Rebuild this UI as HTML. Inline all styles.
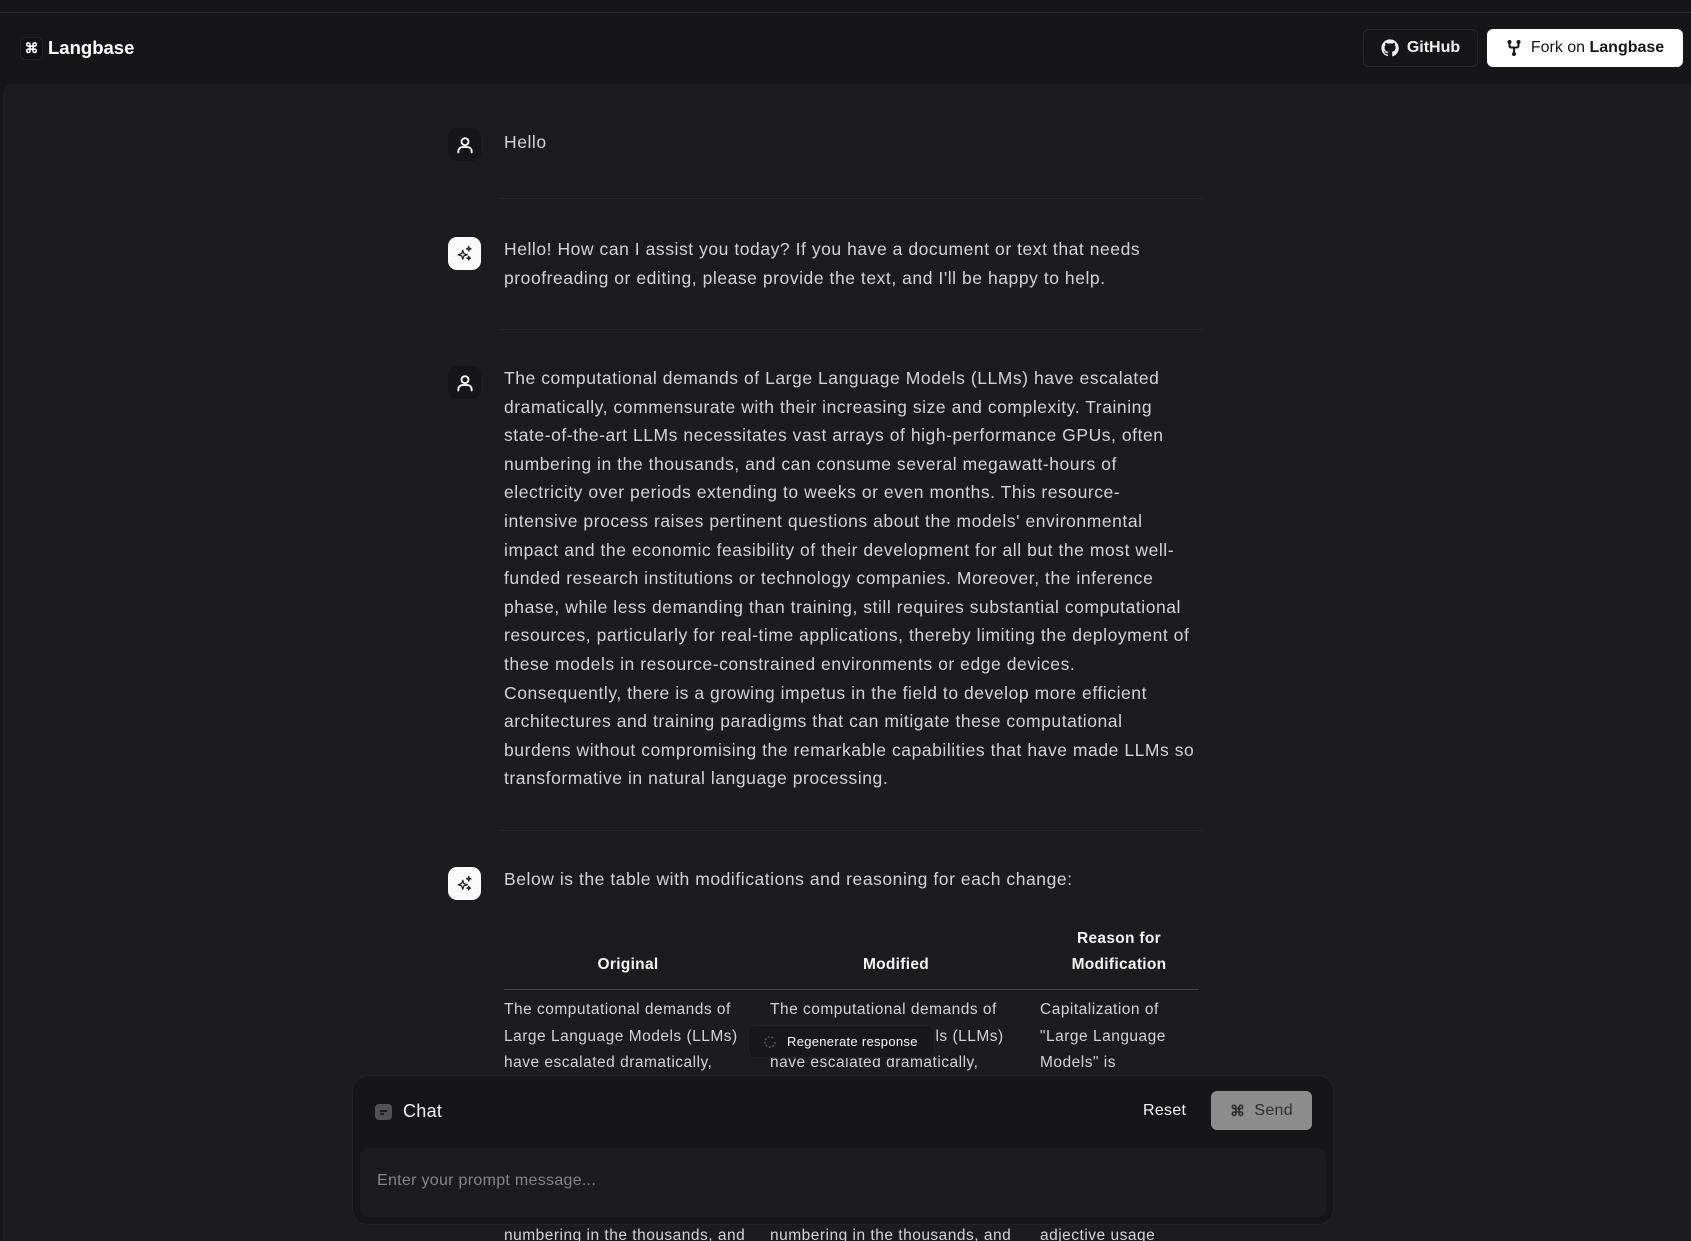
<!DOCTYPE html>
<html style="overflow:hidden;height:1241px"><head><meta charset="utf-8"><style>
*{margin:0;padding:0;box-sizing:border-box}
body{width:1691px;height:1241px;background:#161618;font-family:"Liberation Sans",sans-serif;overflow:hidden;position:relative;color:#d6d6da}
.a{position:absolute}
.topline{left:0;top:12px;width:1691px;height:1px;background:#26262a}
.main{left:3px;top:84px;width:1688px;height:1157px;background:#1c1c1e;border-radius:10px 0 0 0}
.av{width:33px;height:33px;border-radius:9px;display:flex;align-items:center;justify-content:center}
.av.u{background:#161618}
.av.b{background:#fafafa}
.t{font-size:17.5px;line-height:28.6px;letter-spacing:0.55px;white-space:nowrap;color:#d4d4d8}
.sep{left:500px;width:703px;height:1px;background:#27272a}
.th{font-weight:bold;color:#f4f4f5;font-size:15.5px;line-height:26px;text-align:center;white-space:nowrap;letter-spacing:0.3px}
.td{font-size:15.5px;line-height:26.5px;white-space:nowrap;color:#d4d4d8;letter-spacing:0.5px}
</style></head><body>
<div class="a topline"></div>
<div class="a" style="left:20px;top:37px;width:23px;height:23px;border-radius:6px;background:#111113;border:1px solid #222;display:flex;align-items:center;justify-content:center;color:#fff;font-size:14px;font-weight:bold">⌘</div>
<div class="a" style="left:48px;top:36px;font-size:18.5px;font-weight:bold;color:#fff;line-height:24px">Langbase</div>
<div class="a" style="left:1363px;top:29px;width:115px;height:38px;border:1px solid #27272a;border-radius:6px;background:#161618;display:flex;align-items:center;justify-content:center;gap:8px;color:#f0f0f0;font-size:16px;font-weight:bold">
<svg width="18" height="18" viewBox="0 0 24 24" fill="#f0f0f0"><path d="M12 .5C5.7.5.5 5.7.5 12c0 5.1 3.3 9.4 7.9 10.9.6.1.8-.3.8-.6v-2c-3.2.7-3.900-1.5-3.900-1.5-.5-1.3-1.300-1.700-1.300-1.700-1-.7.1-.7.1-.7 1.200.1 1.800 1.200 1.800 1.200 1 1.800 2.700 1.300 3.400 1 .1-.8.4-1.300.7-1.600-2.600-.3-5.300-1.300-5.300-5.700 0-1.300.5-2.300 1.200-3.100-.1-.3-.5-1.500.1-3.100 0 0 1-.3 3.200 1.200a11 11 0 0 1 5.800 0c2.200-1.500 3.200-1.200 3.200-1.200.6 1.600.2 2.800.1 3.100.8.8 1.200 1.900 1.200 3.100 0 4.400-2.700 5.400-5.300 5.700.4.4.8 1.100.8 2.200v3.300c0 .3.2.7.8.6 4.600-1.500 7.900-5.800 7.900-10.900C23.500 5.700 18.300.5 12 .5z"/></svg>GitHub</div>
<div class="a" style="left:1487px;top:29px;width:196px;height:38px;border-radius:6px;background:#fff;display:flex;align-items:center;justify-content:center;gap:9px;color:#18181b;font-size:16px">
<svg width="16" height="18" viewBox="0 0 16 18"><circle cx="3.5" cy="3" r="2" fill="#18181b"/><circle cx="12.5" cy="3" r="2" fill="#18181b"/><circle cx="8" cy="15" r="2" fill="#18181b"/><path d="M3.5 4v2.5q0 2 2 2h5q2 0 2-2V4M8 8.5V13" stroke="#18181b" stroke-width="2" fill="none"/></svg><span>Fork on <b>Langbase</b></span></div>

<div class="a main"></div>

<div class="a av u" style="left:448px;top:128px"><svg width="20" height="20" viewBox="0 0 24 24" fill="none" stroke="#fff" stroke-width="2.2" stroke-linecap="round"><circle cx="12" cy="8" r="4.2"/><path d="M4 21v-1.5a5 5 0 0 1 5-5h6a5 5 0 0 1 5 5V21"/></svg></div>
<div class="a t" style="left:504px;top:128px">Hello</div>
<div class="a sep" style="top:198px"></div>

<div class="a av b" style="left:448px;top:237px"><svg width="18" height="18" viewBox="0 0 24 24" fill="none" stroke="#222" stroke-width="1.6" stroke-linejoin="round"><path d="M9 7l1.5 4.5L15 13l-4.5 1.5L9 19l-1.5-4.5L3 13l4.5-1.5z"/><path d="M17 2l.8 2.2L20 5l-2.2.8L17 8l-.8-2.2L14 5l2.2-.8zM17 15l.7 1.8 1.8.7-1.8.7L17 20l-.7-1.8-1.8-.7 1.8-.7z"/></svg></div>
<div class="a t" style="left:504px;top:235px">Hello! How can I assist you today? If you have a document or text that needs<br>proofreading or editing, please provide the text, and I'll be happy to help.</div>
<div class="a sep" style="top:329px"></div>

<div class="a av u" style="left:448px;top:366px"><svg width="20" height="20" viewBox="0 0 24 24" fill="none" stroke="#fff" stroke-width="2.2" stroke-linecap="round"><circle cx="12" cy="8" r="4.2"/><path d="M4 21v-1.5a5 5 0 0 1 5-5h6a5 5 0 0 1 5 5V21"/></svg></div>
<div class="a t" style="left:504px;top:364px">The computational demands of Large Language Models (LLMs) have escalated<br>dramatically, commensurate with their increasing size and complexity. Training<br>state-of-the-art LLMs necessitates vast arrays of high-performance GPUs, often<br>numbering in the thousands, and can consume several megawatt-hours of<br>electricity over periods extending to weeks or even months. This resource-<br>intensive process raises pertinent questions about the models' environmental<br>impact and the economic feasibility of their development for all but the most well-<br>funded research institutions or technology companies. Moreover, the inference<br>phase, while less demanding than training, still requires substantial computational<br>resources, particularly for real-time applications, thereby limiting the deployment of<br>these models in resource-constrained environments or edge devices.<br>Consequently, there is a growing impetus in the field to develop more efficient<br>architectures and training paradigms that can mitigate these computational<br>burdens without compromising the remarkable capabilities that have made LLMs so<br>transformative in natural language processing.</div>
<div class="a sep" style="top:830px"></div>

<div class="a av b" style="left:448px;top:867px"><svg width="18" height="18" viewBox="0 0 24 24" fill="none" stroke="#222" stroke-width="1.6" stroke-linejoin="round"><path d="M9 7l1.5 4.5L15 13l-4.5 1.5L9 19l-1.5-4.5L3 13l4.5-1.5z"/><path d="M17 2l.8 2.2L20 5l-2.2.8L17 8l-.8-2.2L14 5l2.2-.8zM17 15l.7 1.8 1.8.7-1.8.7L17 20l-.7-1.8-1.8-.7 1.8-.7z"/></svg></div>
<div class="a t" style="left:504px;top:865px">Below is the table with modifications and reasoning for each change:</div>

<div class="a th" style="left:540px;top:952px;width:176px">Original</div>
<div class="a th" style="left:806px;top:952px;width:180px">Modified</div>
<div class="a th" style="left:1040px;top:926px;width:158px">Reason for<br>Modification</div>
<div class="a" style="left:504px;top:989px;width:695px;height:1px;background:#3f3f46"></div>
<div class="a td" style="left:504px;top:997px">The computational demands of<br>Large Language Models (LLMs)<br>have escalated dramatically,</div>
<div class="a td" style="left:770px;top:997px">The computational demands of<br>Large Language Models (LLMs)<br>have escalated dramatically,</div>
<div class="a td" style="left:1040px;top:997px">Capitalization of<br>"Large Language<br>Models" is</div>
<div class="a td" style="left:504px;top:1223px">numbering in the thousands, and</div>
<div class="a td" style="left:770px;top:1223px">numbering in the thousands, and</div>
<div class="a td" style="left:1040px;top:1223px">adjective usage</div>

<div class="a" style="left:748px;top:1025px;width:187px;height:33px;background:#18181a;border:1px solid #222225;border-radius:7px;display:flex;align-items:center;gap:10px;padding-left:14px;color:#fafafa;font-size:13px;letter-spacing:0.3px">
<svg width="14" height="14" viewBox="0 0 14 14" fill="none" stroke="#555" stroke-width="1.6"><path d="M12 7a5 5 0 1 1-2-4" stroke-dasharray="2 1.5"/></svg>Regenerate response</div>

<div class="a" style="left:352px;top:1075px;width:982px;height:150px;background:#161618;border:1px solid #222225;border-radius:16px"></div>
<div class="a" style="left:375px;top:1104px;width:17px;height:16px;border-radius:4px;background:#525256"><div style="position:absolute;left:5px;top:6px;width:7px;height:1.5px;background:#1c1c1e"></div><div style="position:absolute;left:5px;top:9px;width:4px;height:1.5px;background:#1c1c1e"></div></div>
<div class="a" style="left:403px;top:1100px;font-size:18px;color:#f4f4f5;line-height:22px;letter-spacing:0.3px">Chat</div>
<div class="a" style="left:1143px;top:1100px;font-size:16px;color:#f4f4f5;line-height:22px;letter-spacing:0.3px">Reset</div>
<div class="a" style="left:1211px;top:1091px;width:101px;height:39px;border-radius:6px;background:#8c8c8c;display:flex;align-items:center;justify-content:center;gap:9px;color:#303032;font-size:16px;letter-spacing:0.3px"><span style="font-size:15px;font-weight:bold">⌘</span>Send</div>
<div class="a" style="left:360px;top:1148px;width:966px;height:69px;background:#1c1c1e;border-radius:8px"></div>
<div class="a" style="left:377px;top:1171px;font-size:16px;color:#85858b;line-height:20px;letter-spacing:0.3px">Enter your prompt message...</div>
</body></html>
